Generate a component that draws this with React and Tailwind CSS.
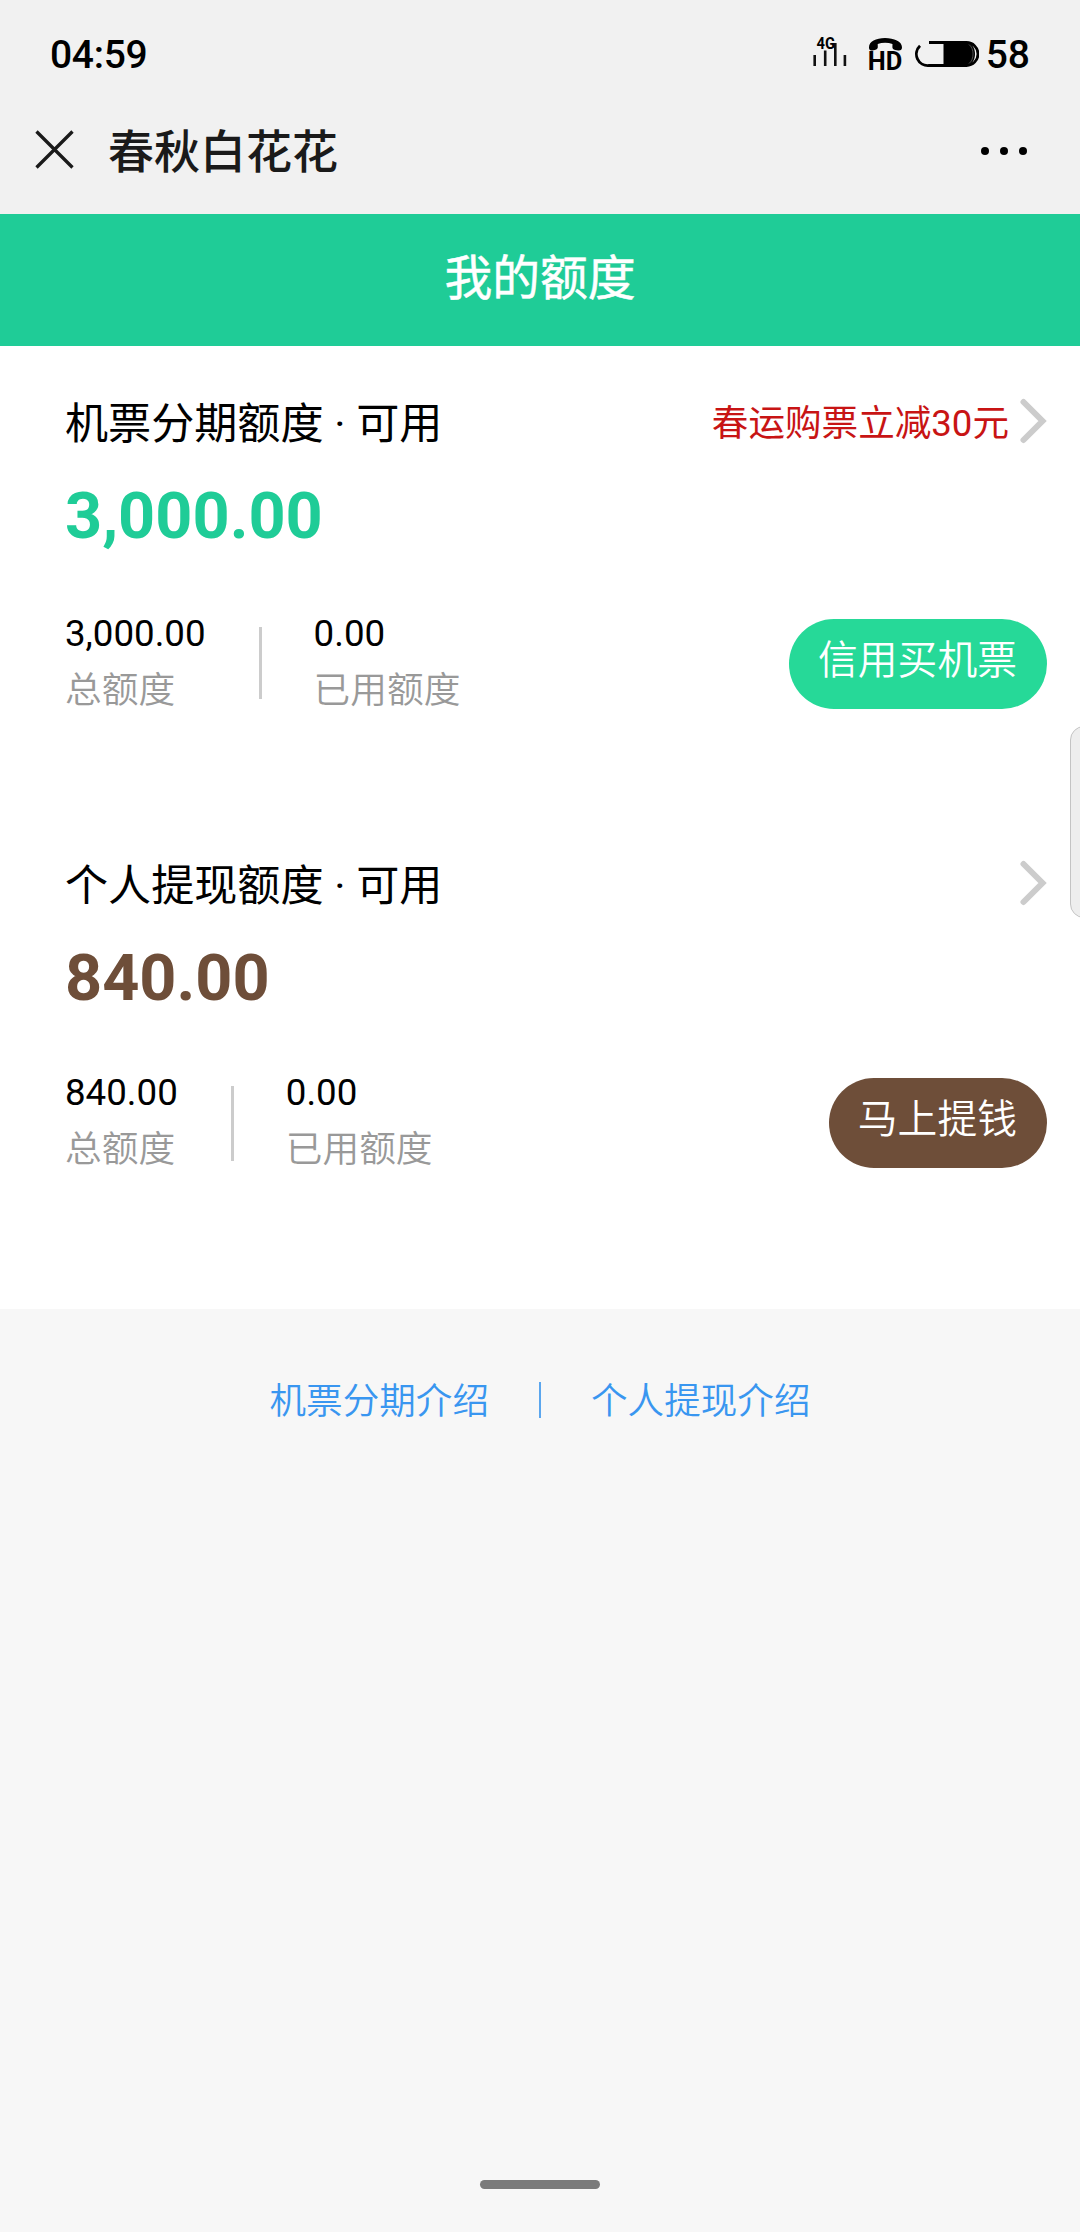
import React from 'react';

const StatusIcons = () => (
  <svg width="168" height="40" viewBox="0 0 168 40" fill="none">
    {/* signal */}
    <g stroke="#111" strokeWidth="2.6">
      <path d="M3.7 20v11M14.2 15.500v15.500M24.300 8v23M33.900 20v11" />
    </g>
    <text x="5.500" y="14" fontSize="16" fontWeight="700" textLength="18.500" lengthAdjust="spacingAndGlyphs" fill="#000">4G</text>
    {/* handset over HD */}
    <path
      d="M58 12.200C58 6.500 65 3 74 3s17 3.500 17 9.200c0 2.400-1.400 3.600-3.800 3.300l-3-.5c-2.200-.4-3-1.600-2.800-3.800l.1-2.200c-4.600-1.700-10.200-1.700-14.800 0l.1 2.200c.2 2.200-.8 3.400-3 3.800l-2.500.5c-2.300.3-3.300-.9-3.300-3.300z"
      fill="#000"
    />
    <text x="56.700" y="35" fontSize="25" fontWeight="700" textLength="34.500" lengthAdjust="spacingAndGlyphs" fill="#000">HD</text>
    {/* battery */}
    <path d="M118 7.500h37.500a11.500 11.500 0 0 1 0 23H118a11.500 11.500 0 0 1-9-19.800" stroke="#000" strokeWidth="2.800" />
    <path d="M132.500 7.500h22c6 0 9.500 5 9.500 11.500s-3.500 11.500-9.500 11.500h-22z" fill="#000" />
    <path d="M158 9.500c5.400 4 5.400 15 0 19" stroke="#888" strokeWidth=".6" />
  </svg>
);

const Chevron = () => (
  <svg width="28" height="46" viewBox="0 0 28 46" fill="none">
    <path d="M4.500 4L23.500 23L4.500 42" stroke="#ccc" strokeWidth="6" strokeLinecap="round" />
  </svg>
);

const Stat = ({ value, label }) => (
  <div className="flex flex-col pt-[1px] text-[36.7px]">
    <span className="h-[57px] leading-[56px] text-black">{value}</span>
    <span className="h-[56px] leading-[56px] font-[350] text-[#999]">{label}</span>
  </div>
);

const QuotaCard = ({ title, promo, amount, amountClass, total, used, action, actionClass, statsClass, dividerClass }) => (
  <section className="pr-[33px] pl-[65px]">
    <div className="flex h-[64px] items-center justify-between">
      <h2 className="pt-[8px] text-[43.1px] leading-[64px] text-black">{title}</h2>
      <div className="flex items-center gap-[10px]">
        {promo && <span className="pt-[6px] text-[36.6px] leading-[64px] text-[#c81414]">{promo}</span>}
        <Chevron />
      </div>
    </div>
    <div className={`mt-[23px] h-[80px] text-[64.8px] leading-[80px] font-bold ${amountClass}`}>{amount}</div>
    <div className={`flex items-start ${statsClass}`}>
      <Stat value={total} label="总额度" />
      <div className={`mr-[52px] w-[3px] bg-[#ccc] ${dividerClass}`} />
      <Stat value={used} label="已用额度" />
      <button className={`mt-[14px] ml-auto h-[90px] rounded-full pr-[30px] pb-[7px] pl-[29px] text-[39.8px] font-[350] text-white ${actionClass}`}>
        {action}
      </button>
    </div>
  </section>
);

export default function App() {
  return (
    <div className="relative flex h-[2232px] w-[1080px] flex-col overflow-hidden bg-[#f7f7f7] font-['Roboto','Noto_Sans_CJK_SC',sans-serif]">
      <header className="h-[214px] bg-[#f1f1f1]">
        <div className="flex h-[108px] items-center justify-between pt-[2px] pr-[50px] pl-[50px] text-[39px] font-medium text-black">
          <span className="tracking-[-0.3px]">04:59</span>
          <div className="flex items-center gap-[7px]">
            <StatusIcons />
            <span>58</span>
          </div>
        </div>
        <div className="flex h-[86px] items-center pr-[53px] pl-[35px]">
          <svg className="mb-[3px]" width="39" height="39" viewBox="0 0 39 39" fill="none" stroke="#1a1a1a" strokeWidth="3.300">
            <path d="M1.500 1.500L37.500 37.500M37.500 1.500L1.500 37.500" />
          </svg>
          <h1 className="ml-[34px] pt-[2px] text-[46px] leading-[86px] font-medium text-[#1a1a1a]">春秋白花花</h1>
          <div className="ml-auto flex gap-[11px]">
            <i className="size-[8px] rounded-full bg-black" />
            <i className="size-[8px] rounded-full bg-black" />
            <i className="size-[8px] rounded-full bg-black" />
          </div>
        </div>
      </header>

      <div className="h-[132px] bg-[#1fcc97] text-center text-[47.8px] leading-[131px] text-white [-webkit-text-stroke:0.5px_white]">
        我的额度
      </div>

      <main className="h-[963px] bg-white pt-[43px]">
        <QuotaCard
          title="机票分期额度 · 可用"
          promo="春运购票立减30元"
          amount="3,000.00"
          amountClass="text-[#1fcc97]"
          total="3,000.00"
          used="0.00"
          action="信用买机票"
          actionClass="bg-[#26d998]"
          statsClass="mt-[49px] h-[246px]"
          dividerClass="mt-[22px] ml-[53px] h-[72px]"
        />
        <QuotaCard
          title="个人提现额度 · 可用"
          amount="840.00"
          amountClass="text-[#6e4e39]"
          total="840.00"
          used="0.00"
          action="马上提钱"
          actionClass="bg-[#6e4e39]"
          statsClass="mt-[46px]"
          dividerClass="mt-[22px] ml-[53px] h-[75px]"
        />
      </main>

      <footer className="mt-[59px] flex h-[64px] items-center justify-center text-[36.6px] font-[350] text-[#3996f0]">
        <a className="pt-[4px]">机票分期介绍</a>
        <span className="mx-[50px] h-[36px] w-[2px] bg-[#5ba6ee]" />
        <a className="pt-[4px]">个人提现介绍</a>
      </footer>

      {/* floating edge handle */}
      <div className="absolute top-[726px] -right-[20px] h-[192px] w-[30px] rounded-[14px] border border-[#c4c4c4] bg-[#eee]" />
      <div className="mx-auto mt-auto mb-[43px] h-[9px] w-[120px] rounded-full bg-[#7b7b7b]" />
    </div>
  );
}
